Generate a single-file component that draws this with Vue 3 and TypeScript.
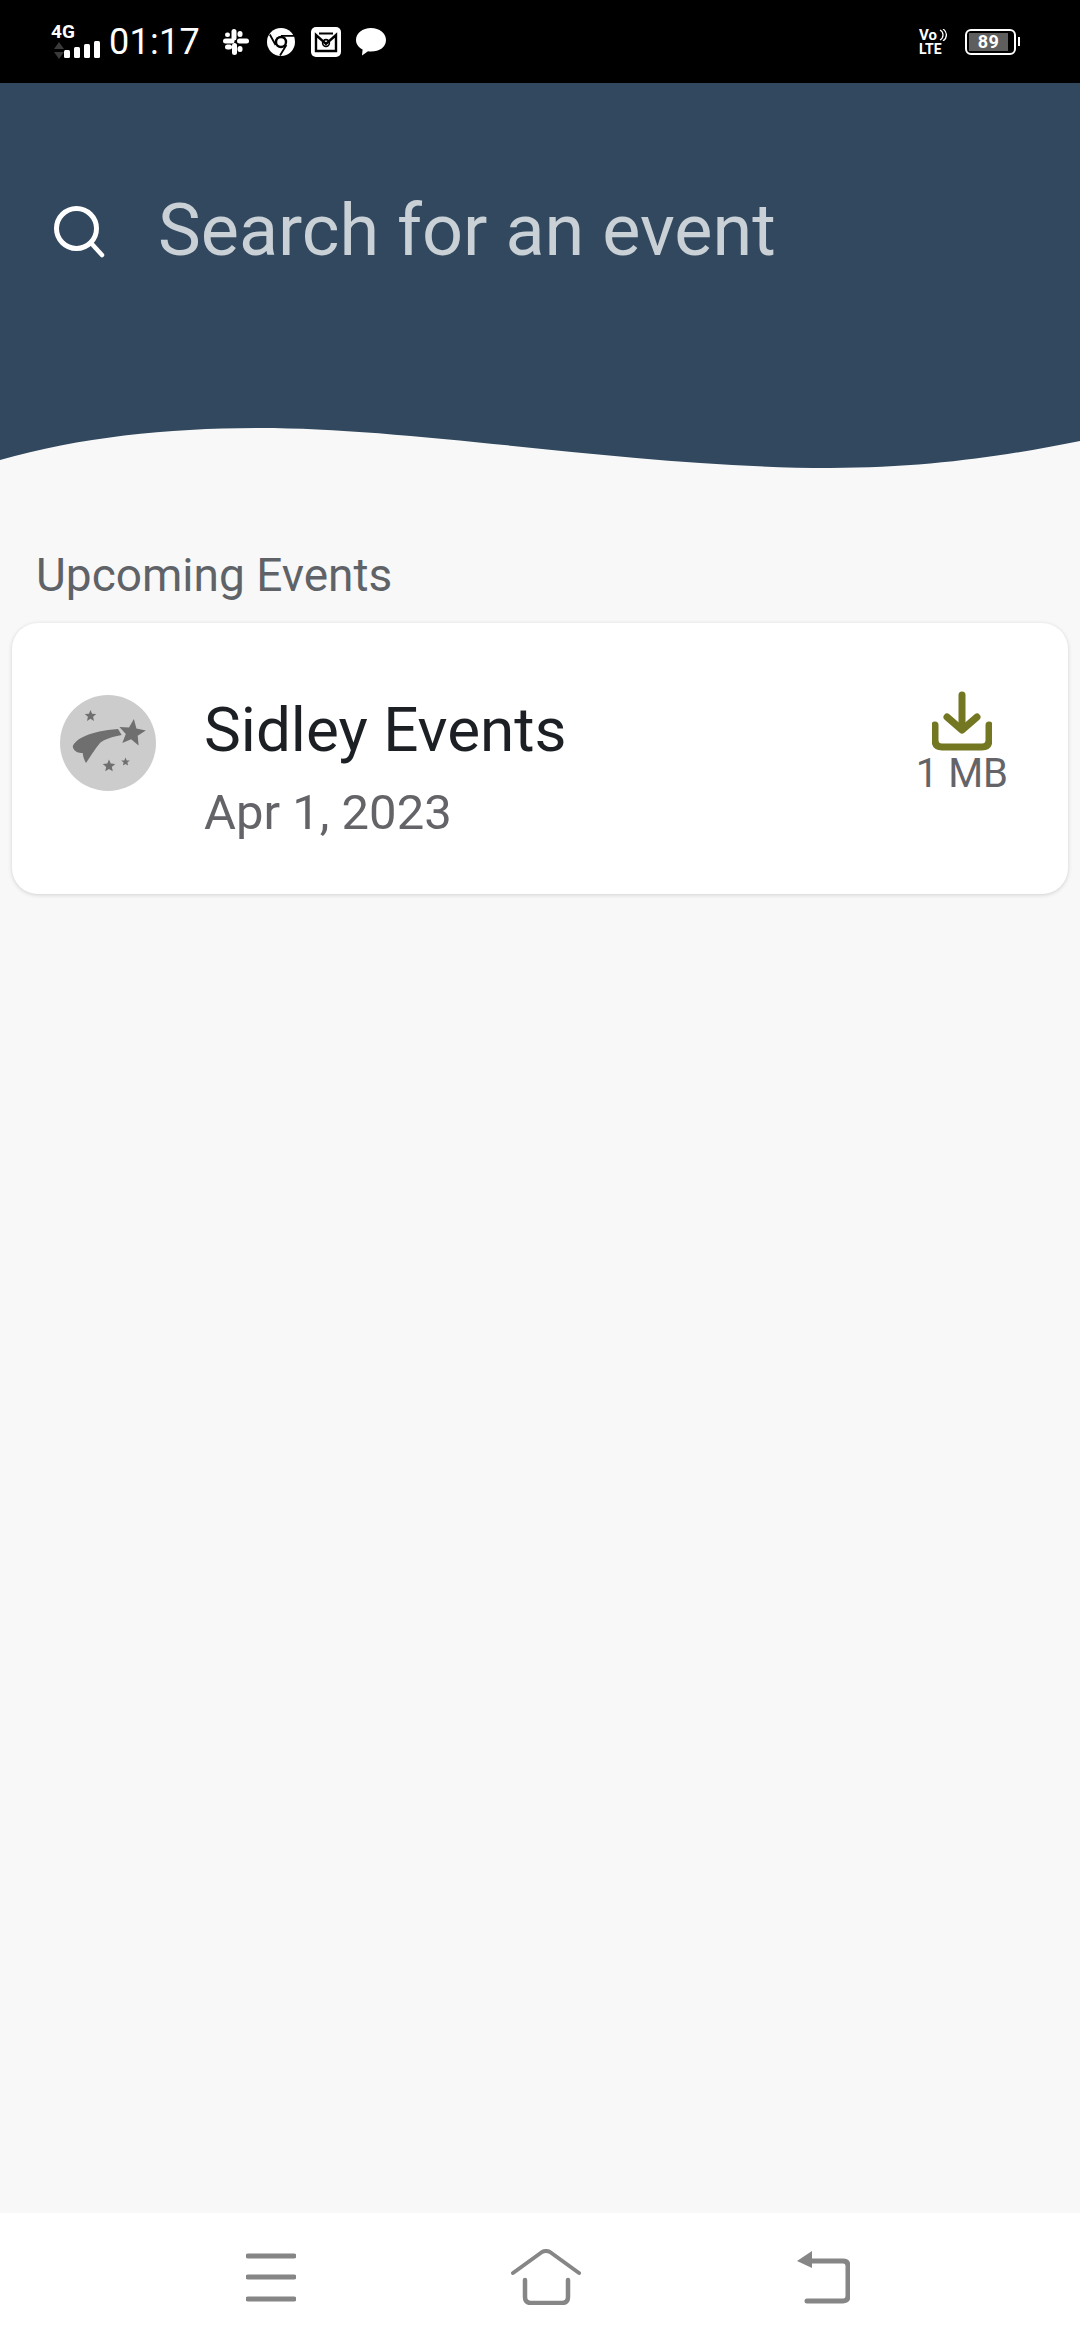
<script setup lang="ts">
interface Star { cx: number; cy: number; r: number; rot: number }

function starPoints(s: Star): string {
  const pts: string[] = []
  for (let i = 0; i < 10; i++) {
    const radius = i % 2 === 0 ? s.r : s.r * 0.45
    const a = ((-90 + s.rot + i * 36) * Math.PI) / 180
    pts.push(`${(s.cx + radius * Math.cos(a)).toFixed(1)},${(s.cy + radius * Math.sin(a)).toFixed(1)}`)
  }
  return pts.join(' ')
}

const stars: Star[] = [
  { cx: 72, cy: 38, r: 14, rot: 8 },
  { cx: 30.5, cy: 21, r: 6, rot: 0 },
  { cx: 49, cy: 71, r: 6.5, rot: 0 },
  { cx: 65.5, cy: 67, r: 4.5, rot: 0 },
]
</script>

<template>
  <div class="screen">
    <header class="status">
      <div class="net">
        <span class="net-4g">4G</span>
        <svg class="net-arrows" width="12" height="18" viewBox="0 0 12 18">
          <path d="M6 0 L11 7 H1Z M1 10 H11 L6 17Z" fill="#3a3a3a" />
        </svg>
        <svg class="net-bars" width="36" height="17" viewBox="0 0 36 17">
          <rect x="0" y="9" width="6" height="8" rx="1.5" fill="#fff" />
          <rect x="10" y="6" width="6" height="11" rx="1.5" fill="#fff" />
          <rect x="20" y="3" width="6" height="14" rx="1.5" fill="#fff" />
          <rect x="30" y="0" width="6" height="17" rx="1.5" fill="#fff" />
        </svg>
      </div>
      <span class="time">01:17</span>
      <svg class="ic-slack" width="26" height="26" viewBox="0 0 26 26" fill="#fff">
        <rect x="8.5" y="0" width="5" height="11.5" rx="2.5" />
        <rect x="14.5" y="14" width="5" height="12" rx="2.5" transform="translate(-5.5 0)" />
        <rect x="0" y="8.5" width="11.5" height="5" rx="2.5" transform="translate(0 1)" />
        <rect x="14" y="9.5" width="12" height="5" rx="2.5" />
        <rect x="14.5" y="2" width="5" height="6" rx="2.5" />
        <rect x="2" y="15.5" width="7" height="5" rx="2.5" />
        <rect x="14.5" y="17" width="5" height="6" rx="2.5" />
        <rect x="2" y="3.5" width="5" height="4.5" rx="2.2" />
      </svg>
      <svg class="ic-chrome" width="28" height="28" viewBox="0 0 28 28">
        <circle cx="14" cy="14" r="14" fill="#fff" />
        <circle cx="14" cy="14" r="6.2" fill="#000" />
        <circle cx="14" cy="14" r="3.8" fill="#fff" />
        <path d="M14 7.8 H27 M8.6 17 L2.8 6.5 M19.4 17 L13 27.5" stroke="#000" stroke-width="1.8" fill="none" />
      </svg>
      <svg class="ic-mail" width="30" height="30" viewBox="0 0 30 30">
        <rect x="0" y="0" width="30" height="30" rx="5" fill="#fff" />
        <path d="M5 8 V24 H25 V8 L15 17Z" fill="none" stroke="#000" stroke-width="2.4" />
        <path d="M8 6.5 H22" stroke="#000" stroke-width="2" />
        <circle cx="15" cy="16" r="3.4" fill="none" stroke="#000" stroke-width="1.6" />
      </svg>
      <svg class="ic-bubble" width="30" height="28" viewBox="0 0 30 28">
        <path d="M15 0 C23.5 0 30 5 30 12 C30 19 23.5 23.5 15 23.5 C14 23.5 13 23.4 12 23.3 L6 27.5 L6.6 21.6 C2.6 19.4 0 16 0 12 C0 5 6.5 0 15 0Z" fill="#fff" />
      </svg>
      <span class="grow"></span>
      <div class="volte">
        <span class="vo">Vo</span>
        <span class="lte">LTE</span>
        <svg class="vo-waves" width="8" height="12" viewBox="0 0 8 12">
          <path d="M1 1 C5 3 5 9 1 11 M4 0 C8.5 3 8.5 9 4 12" stroke="#fff" stroke-width="1.3" fill="none" />
        </svg>
      </div>
      <div class="battery">
        <div class="battery-body">
          <div class="battery-fill"><span>89</span></div>
        </div>
        <span class="battery-nub"></span>
      </div>
    </header>

    <section class="hero">
      <div class="search">
        <svg class="search-icon" width="54" height="54" viewBox="0 0 54 54">
          <circle cx="24.5" cy="24.5" r="20" fill="none" stroke="#fff" stroke-width="5" />
          <path d="M39 39 L50 51" stroke="#fff" stroke-width="4.5" stroke-linecap="round" />
        </svg>
        <span class="search-text">Search for an event</span>
      </div>
    </section>
    <svg class="wave" width="1080" height="45" viewBox="0 0 1080 45">
      <path d="M0 35 C80 12 170 3 260 3 C420 3 640 43 830 43 C930 43 1010 30 1080 16 V0 H0Z" fill="#31485e" />
    </svg>

    <main class="content">
      <h2 class="heading">Upcoming Events</h2>
      <article class="card">
        <svg class="avatar" width="96" height="96" viewBox="0 0 96 96">
          <circle cx="48" cy="48" r="48" fill="#cccccc" />
          <path d="M12.7 51.7 C15 44 30 36 58 34 L61.7 40 C52 42 45 44 40 48 C35 54 30 62 26 68 C24 65 23 61 22.7 58 C19 58 14 57 12.7 51.7Z" fill="#6f6f6f" />
          <polygon v-for="(s, i) in stars" :key="i" :points="starPoints(s)" fill="#6f6f6f" />
        </svg>
        <div class="info">
          <span class="title">Sidley Events</span>
          <span class="date">Apr 1, 2023</span>
        </div>
        <div class="download">
          <svg width="60" height="60" viewBox="0 0 60 60">
            <g fill="none" stroke="#737722" stroke-width="7" stroke-linecap="round" stroke-linejoin="round">
              <path d="M30 4 V38" />
              <path d="M15 26 L30 39 L45 26" />
              <path d="M3 34 V49 Q3 56 10 56 H50 Q57 56 57 49 V34" />
            </g>
          </svg>
          <span class="size">1 MB</span>
        </div>
      </article>
    </main>

    <nav class="nav">
      <svg width="50" height="50" viewBox="0 0 50 50">
        <path d="M2 4 H48 M2 25 H48 M2 47 H48" stroke="#868686" stroke-width="5" stroke-linecap="round" />
      </svg>
      <svg width="70" height="56" viewBox="0 0 70 56">
        <g fill="none" stroke="#868686" stroke-width="4" stroke-linecap="round" stroke-linejoin="round">
          <path d="M2 24 L31 3 Q35 1 39 3 L68 24" />
          <path d="M14 31 V48 Q14 54 20 54 H51 Q57 54 57 48 V31" stroke-width="4.5" />
        </g>
      </svg>
      <svg width="54" height="54" viewBox="0 0 54 54">
        <path d="M10 11 H47 Q52 11 52 16 V46 Q52 51 47 51 H11" fill="none" stroke="#868686" stroke-width="5" stroke-linecap="round" />
        <path d="M1 11 L16 1 V18Z" fill="#868686" />
      </svg>
    </nav>
  </div>
</template>

<style scoped>
.screen {
  width: 1080px;
  height: 2340px;
  display: flex;
  flex-direction: column;
  background: #f8f8f8;
  font-family: Roboto, "Liberation Sans", sans-serif;
  overflow: hidden;
}
.status {
  height: 83px;
  flex: none;
  background: #000;
  display: flex;
  align-items: center;
  padding: 0 60px 0 50px;
  box-sizing: border-box;
  color: #fff;
}
.net {
  position: relative;
  width: 50px;
  height: 36px;
  margin-right: 9px;
  flex: none;
}
.net-4g {
  position: absolute;
  left: 1px;
  top: -2px;
  font-size: 19px;
  line-height: 20px;
  font-weight: 700;
}
.net-arrows {
  position: absolute;
  left: 3px;
  top: 18px;
}
.net-bars {
  position: absolute;
  left: 14px;
  top: 17px;
}
.time {
  font-size: 36px;
  line-height: 40px;
  letter-spacing: 0.3px;
  margin-right: 23px;
}
.ic-slack { margin-right: 18px; flex: none; }
.ic-chrome { margin-right: 16px; flex: none; }
.ic-mail { margin-right: 15px; flex: none; }
.ic-bubble { flex: none; }
.grow { flex: 1; }
.volte {
  position: relative;
  width: 27px;
  height: 26px;
  margin-right: 19px;
  font-weight: 700;
  flex: none;
}
.vo {
  position: absolute;
  left: 0;
  top: -1px;
  font-size: 15px;
  line-height: 15px;
}
.lte {
  position: absolute;
  left: 0;
  top: 13px;
  font-size: 14px;
  line-height: 14px;
}
.vo-waves {
  position: absolute;
  right: -1px;
  top: 0;
}
.battery {
  display: flex;
  align-items: center;
  flex: none;
}
.battery-body {
  width: 51px;
  height: 26px;
  box-sizing: border-box;
  border: 2.5px solid #fff;
  border-radius: 6px;
  padding: 2px 6px 2px 2px;
  display: flex;
}
.battery-fill {
  flex: 1;
  background: #5e5e5e;
  display: flex;
  align-items: center;
  justify-content: center;
}
.battery-fill span {
  font-size: 18px;
  line-height: 18px;
  font-weight: 700;
  letter-spacing: 0.5px;
}
.battery-nub {
  width: 2px;
  height: 9px;
  margin-left: 2px;
  background: #fff;
}
.hero {
  height: 342px;
  flex: none;
  background: #31485e;
  box-sizing: border-box;
  padding: 121px 0 0 52px;
}
.search {
  display: flex;
  align-items: center;
  height: 54px;
}
.search-icon { flex: none; }
.search-text {
  margin-left: 52px;
  font-size: 72px;
  line-height: 84px;
  color: #c9d0d6;
  white-space: nowrap;
}
.wave {
  display: block;
  flex: none;
}
.content {
  flex: 1;
  min-height: 0;
  padding: 0 12px;
}
.heading {
  margin: 78px 0 0 24px;
  font-size: 46px;
  line-height: 54px;
  font-weight: 400;
  color: #5f6368;
}
.card {
  margin-top: 21px;
  height: 271px;
  box-sizing: border-box;
  background: #fff;
  border-radius: 26px;
  box-shadow: 0 1px 4px rgba(0, 0, 0, 0.16);
  display: flex;
  align-items: flex-start;
  padding: 72px 0 0 48px;
}
.avatar { flex: none; }
.info {
  margin-left: 48px;
  display: flex;
  flex-direction: column;
}
.title {
  font-size: 62px;
  line-height: 72px;
  margin-top: -1px;
  color: #1c1f23;
}
.date {
  margin-top: 18px;
  font-size: 49px;
  line-height: 58px;
  color: #646468;
}
.download {
  margin-left: auto;
  margin-right: 60px;
  margin-top: -4px;
  display: flex;
  flex-direction: column;
  align-items: center;
}
.size {
  margin-top: 0;
  font-size: 40px;
  line-height: 46px;
  color: #646468;
}
.nav {
  height: 127px;
  flex: none;
  background: #fff;
  position: relative;
  display: flex;
  align-items: center;
  justify-content: space-between;
  padding: 0 230px 0 246px;
  box-sizing: border-box;
}
</style>
